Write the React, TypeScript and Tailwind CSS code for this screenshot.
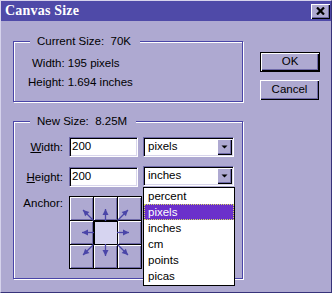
import React from "react";

const raised =
  "shadow-[inset_1px_1px_0_#ffffff,inset_-1px_-1px_0_#000000,inset_-2px_-2px_0_#6e69a8]";
const sunken =
  "border-t-[#6e69a8] border-l-[#6e69a8] border-r-[#ffffff] border-b-[#ffffff] border shadow-[inset_1px_1px_0_#000000,inset_-1px_-1px_0_#d8d5ec]";

function Arrows() {
  const c = "#4a45a8";
  const head = (x: number, y: number, dx: number, dy: number) => {
    const len = Math.hypot(dx, dy);
    const ux = dx / len;
    const uy = dy / len;
    const bx = x - ux * 6;
    const by = y - uy * 6;
    const px = -uy * 3;
    const py = ux * 3;
    return `${x},${y} ${bx + px},${by + py} ${bx - px},${by - py}`;
  };
  const arrows: [number, number, number, number][] = [
    [36.5, 25, 36.5, 13],
    [36.5, 48, 36.5, 60],
    [25, 36.5, 13, 36.5],
    [48, 36.5, 60, 36.5],
    [24.5, 24.5, 14, 14],
    [48.5, 24.5, 59, 14],
    [24.5, 48.5, 14, 59],
    [48.5, 48.5, 59, 59],
  ];
  return (
    <svg
      className="absolute left-0 top-0 pointer-events-none"
      width="73"
      height="73"
      viewBox="0 0 73 73"
    >
      {arrows.map(([x1, y1, x2, y2], i) => (
        <g key={i}>
          <line x1={x1} y1={y1} x2={x2} y2={y2} stroke={c} strokeWidth="1.3" />
          <polygon points={head(x2, y2, x2 - x1, y2 - y1)} fill={c} />
        </g>
      ))}
    </svg>
  );
}

function Select({ value }: { value: string }) {
  return (
    <div className={`w-[91px] h-[20px] bg-white flex items-stretch ${sunken}`}>
      <div className="flex-1 pl-[4px] leading-[16px] text-black">{value}</div>
      <div
        className={`w-[15px] my-[1px] mr-[1px] bg-[#aea9d1] flex items-center justify-center ${raised}`}
      >
        <svg width="7" height="4" viewBox="0 0 7 4">
          <polygon points="0.5,0.5 6.5,0.5 3.5,3.5" fill="#000" />
        </svg>
      </div>
    </div>
  );
}

export default function App() {
  const items = ["percent", "pixels", "inches", "cm", "points", "picas"];
  return (
    <div className="w-[332px] h-[293px] bg-[#aea9d1] border border-t-[#d6d3ec] border-l-[#d6d3ec] border-r-[#37337a] border-b-[#37337a] flex flex-col font-['Liberation_Sans',Arial,sans-serif] text-[11.5px] text-black overflow-hidden">
      {/* title bar */}
      <div className="h-[20px] bg-[#4f4aa8] flex items-center justify-between pl-[4px] pr-[1px]">
        <span className="font-['Liberation_Serif',serif] font-bold text-[14px] text-white leading-[20px] tracking-[0.2px]">
          Canvas Size
        </span>
        <div
          className={`w-[19px] h-[15px] bg-[#aea9d1] flex items-center justify-center ${raised}`}
        >
          <svg width="9" height="8" viewBox="0 0 9 8">
            <line x1="1" y1="0.5" x2="8" y2="7.5" stroke="#000" strokeWidth="2.2" />
            <line x1="8" y1="0.5" x2="1" y2="7.5" stroke="#000" strokeWidth="2.2" />
          </svg>
        </div>
      </div>

      {/* body */}
      <div className="flex pl-[12px] pt-[20px]">
        <div className="flex flex-col w-[230px]">
          {/* Current size */}
          <div className="relative h-[61px] border border-[#4a45a8] shadow-[inset_1px_1px_0_#ffffff,1px_1px_0_#ffffff]">
            <div className="absolute left-[16px] top-[-8px] leading-[14px] bg-[#aea9d1] pl-[7px] pr-[9px]">
              Current Size:&nbsp;&nbsp;70K
            </div>
            <div className="flex flex-col pt-[12px] leading-[19px]">
              <div className="pl-[18px]">Width: 195 pixels</div>
              <div className="pl-[14px]">Height: 1.694 inches</div>
            </div>
          </div>

          {/* New size */}
          <div className="relative mt-[19px] h-[158px] border border-[#4a45a8] shadow-[inset_1px_1px_0_#ffffff,1px_1px_0_#ffffff]">
            <div className="absolute left-[16px] top-[-8px] leading-[14px] bg-[#aea9d1] pl-[7px] pr-[9px]">
              New Size:&nbsp;&nbsp;8.25M
            </div>
            <div className="flex flex-col pt-[15px]">
              <div className="flex items-center h-[20px]">
                <div className="w-[49px] text-right leading-[14px]">
                  <span className="underline">W</span>idth:
                </div>
                <div className={`ml-[6px] w-[69px] h-[20px] bg-white pl-[2px] leading-[16px] ${sunken}`}>
                  200
                </div>
                <div className="ml-[5px]">
                  <Select value="pixels" />
                </div>
              </div>
              <div className="flex items-center h-[20px] mt-[10px]">
                <div className="w-[49px] text-right leading-[14px]">
                  <span className="underline">H</span>eight:
                </div>
                <div className={`ml-[6px] w-[69px] h-[20px] bg-white pl-[2px] leading-[16px] ${sunken}`}>
                  200
                </div>
                <div className="ml-[5px] -mt-[2px]">
                  <Select value="inches" />
                </div>
              </div>
              <div className="flex items-start mt-[9px]">
                <div className="w-[49px] text-right leading-[14px]">Anchor:</div>
                <div className="relative ml-[6px] w-[73px] h-[73px] bg-black p-px grid grid-cols-3 gap-px">
                  {Array.from({ length: 9 }).map((_, i) => (
                    <div
                      key={i}
                      className={
                        i === 4
                          ? "bg-[#d6d4f0] shadow-[inset_1px_1px_0_#000000]"
                          : `bg-[#aea9d1] shadow-[inset_1px_1px_0_#ffffff,inset_-1px_-1px_0_#6e69a8]`
                      }
                    />
                  ))}
                  <Arrows />
                </div>
              </div>
            </div>

            {/* dropdown list */}
            <div className="absolute left-[129px] top-[65px] w-[92px] h-[99px] bg-white border border-black flex flex-col">
              {items.map((it) => (
                <div
                  key={it}
                  className={
                    it === "pixels"
                      ? "h-[16px] leading-[14px] pl-[3px] bg-[#6b30cb] text-white border border-dotted border-[#d8e060]"
                      : "h-[16px] leading-[16px] pl-[4px]"
                  }
                >
                  {it}
                </div>
              ))}
            </div>
          </div>
        </div>

        {/* buttons */}
        <div className="flex flex-col ml-[17px] pt-[11px]">
          <div className="w-[60px] h-[20px] border border-black">
            <div className={`w-full h-full flex items-center justify-center ${raised}`}>OK</div>
          </div>
          <div className={`mt-[8px] w-[59px] h-[20px] flex items-center justify-center ${raised}`}>
            Cancel
          </div>
        </div>
      </div>
    </div>
  );
}
